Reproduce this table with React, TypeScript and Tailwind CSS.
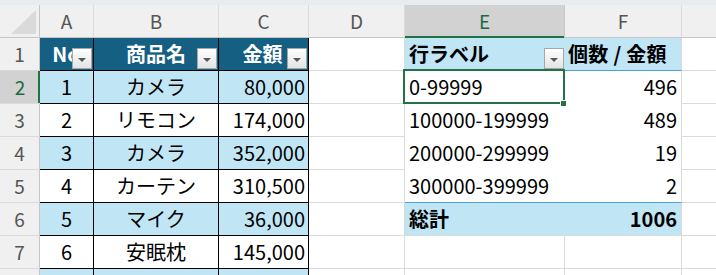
import React from 'react';

const cols = ['A', 'B', 'C', 'D', 'E', 'F', ''];

const items = [
  { no: '1', name: 'カメラ', amount: '80,000' },
  { no: '2', name: 'リモコン', amount: '174,000' },
  { no: '3', name: 'カメラ', amount: '352,000' },
  { no: '4', name: 'カーテン', amount: '310,500' },
  { no: '5', name: 'マイク', amount: '36,000' },
  { no: '6', name: '安眠枕', amount: '145,000' },
  { no: '', name: '', amount: '' },
];

const pivot = [
  { label: '0-99999', count: '496' },
  { label: '100000-199999', count: '489' },
  { label: '200000-299999', count: '19' },
  { label: '300000-399999', count: '2' },
];

function FilterButton() {
  return (
    <span className="absolute right-[1px] bottom-[1px] w-[20px] h-[21px] border border-[#a6a6a6] bg-linear-to-b from-white to-[#e4e4e4] flex items-center justify-center">
      <span className="w-0 h-0 border-l-[4px] border-r-[4px] border-t-[4px] border-l-transparent border-r-transparent border-t-[#595959] mt-[2px]" />
    </span>
  );
}

const grid = 'border-r border-b border-[#dadada]';

export default function App() {
  return (
    <div className="relative w-[716px] h-[275px] overflow-hidden bg-white font-['Noto_Sans_CJK_JP',sans-serif] text-[20px] text-black">
      <div className="h-[5px] bg-[#e9ecef]" />

      <div className="grid w-[800px] grid-cols-[40px_54px_125px_90px_96px_160px_117px_118px] auto-rows-[33px]">
        {/* column headers */}
        <div className="relative bg-[#f0f0f0] border-r border-b border-[#c6c6c6]">
          <svg className="absolute inset-0" width="40" height="33">
            <polygon points="11,29 36,29 36,5" fill="#dadada" />
          </svg>
        </div>
        {cols.map((c, i) =>
          c === 'E' ? (
            <div
              key={i}
              className="bg-[#d2d2d2] border-r border-[#c6c6c6] shadow-[inset_0_-2px_0_#217346] flex items-center justify-center text-[19px] text-[#1b6b3f]"
            >
              {c}
            </div>
          ) : (
            <div
              key={i}
              className="bg-[#f0f0f0] border-r border-b border-r-[#dadada] border-b-[#c6c6c6] flex items-center justify-center text-[19px] text-[#555]"
            >
              {c}
            </div>
          )
        )}

        {/* row 1 */}
        <div className="bg-[#f0f0f0] border-r border-b border-r-[#c6c6c6] border-b-[#dadada] flex items-center justify-center text-[19px] text-[#555]">
          1
        </div>
        <div className="relative bg-[#156082] border-r border-b border-black flex items-center justify-center font-bold text-white">
          <span className="-ml-[1px]">No</span>
          <FilterButton />
        </div>
        <div className="relative bg-[#156082] border-r border-b border-black flex items-center justify-center font-bold text-white">
          商品名
          <FilterButton />
        </div>
        <div className="relative bg-[#156082] border-r border-b border-black flex items-center justify-center font-bold text-white pr-[2px]">
          金額
          <FilterButton />
        </div>
        <div className={grid} />
        <div className="relative bg-[#c0e6f5] border-b border-[#4aa3d8] flex items-center pl-[4px] font-bold">
          行ラベル
          <FilterButton />
        </div>
        <div className="bg-[#c0e6f5] border-r border-b border-r-[#dadada] border-b-[#4aa3d8] flex items-center pl-[3px] font-bold tracking-[0.3px]">
          個数 / 金額
        </div>
        <div className={grid} />

        {/* rows 2-8 */}
        {items.map((it, i) => {
          const rowNo = i + 2;
          const band = i % 2 === 0 ? 'bg-[#c0e6f5]' : 'bg-white';
          const selected = rowNo === 2;
          const pv = pivot[i];
          return (
            <React.Fragment key={rowNo}>
              <div
                className={
                  selected
                    ? 'bg-[#d2d2d2] border-b border-[#dadada] shadow-[inset_-2px_0_0_#217346] flex items-center justify-center text-[19px] text-[#1b6b3f]'
                    : 'bg-[#f0f0f0] border-r border-b border-r-[#c6c6c6] border-b-[#dadada] flex items-center justify-center text-[19px] text-[#555]'
                }
              >
                {rowNo < 8 ? rowNo : ''}
              </div>
              <div className={`${band} border-r border-b border-black flex items-center justify-center`}>{it.no}</div>
              <div className={`${band} border-r border-b border-black flex items-center justify-center`}>{it.name}</div>
              <div className={`${band} border-r border-b border-black flex items-center justify-end pr-[3px]`}>{it.amount}</div>
              <div className={grid} />
              {pv ? (
                <>
                  <div
                    className={`bg-white border-b flex items-center pl-[4px] ${
                      rowNo === 5 ? 'border-[#4aa3d8]' : 'border-white'
                    }`}
                  >
                    {pv.label}
                  </div>
                  <div
                    className={`bg-white border-r border-b border-r-[#dadada] flex items-center justify-end pr-[4px] ${
                      rowNo === 5 ? 'border-b-[#4aa3d8]' : 'border-b-white'
                    }`}
                  >
                    {pv.count}
                  </div>
                </>
              ) : rowNo === 6 ? (
                <>
                  <div className="bg-[#c0e6f5] border-b border-[#dadada] flex items-center pl-[4px] font-bold">総計</div>
                  <div className="bg-[#c0e6f5] border-r border-b border-[#dadada] flex items-center justify-end pr-[4px] font-bold">
                    1006
                  </div>
                </>
              ) : (
                <>
                  <div className={grid} />
                  <div className={grid} />
                </>
              )}
              <div className={grid} />
            </React.Fragment>
          );
        })}
      </div>

      {/* active cell E2 */}
      <div className="absolute left-[403px] top-[69px] w-[162px] h-[35px] border-2 border-[#217346]" />
      <div className="absolute left-[560px] top-[100px] w-[7px] h-[7px] bg-[#217346] border border-white" />
    </div>
  );
}
